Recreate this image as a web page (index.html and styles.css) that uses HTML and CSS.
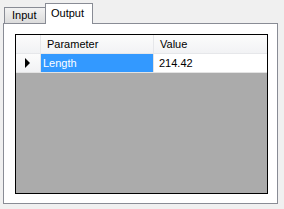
FILE: index.html
```html
<!DOCTYPE html>
<html lang="en">
<head>
    <meta charset="UTF-8">
    <title>Output</title>
    <link rel="stylesheet" href="styles.css">
</head>
<body>
    <div class="tabs">
        <div class="tab-strip">
            <div class="tab">Input</div>
            <div class="tab active">Output</div>
        </div>
        <div class="tab-page">
            <div class="grid">
                <div class="grid-row header">
                    <div class="cell row-head"></div>
                    <div class="cell">Parameter</div>
                    <div class="cell">Value</div>
                </div>
                <div class="grid-row">
                    <div class="cell row-head"><span class="arrow"></span></div>
                    <div class="cell selected">Length</div>
                    <div class="cell">214.42</div>
                </div>
            </div>
        </div>
    </div>
</body>
</html>
```

FILE: styles.css
```css
body {
    margin: 0;
    background: #f0f0f0;
    font-family: 'Liberation Sans', Arial, sans-serif;
    font-size: 11px;
    color: #000;
}

.tabs {
    padding: 3px 6px 0 3px;
    height: 206px;
    display: flex;
    flex-direction: column;
}

.tab-strip {
    display: flex;
    align-items: flex-end;
    padding-left: 1px;
    height: 20px;
    position: relative;
    z-index: 1;
}

.tab {
    box-sizing: border-box;
    height: 16px;
    width: 42px;
    border: 1px solid #898c95;
    border-bottom: none;
    background: linear-gradient(#f2f2f2, #dcdcdc);
    padding-left: 7px;
    line-height: 15px;
}

.tab.active {
    height: 21px;
    width: 48px;
    margin-left: -1px;
    margin-bottom: -1px;
    background: #fff;
    padding-left: 5px;
    line-height: 19px;
}

.tab-page {
    flex: 1;
    background: #fff;
    border: 1px solid #898c95;
    margin-bottom: 5px;
    padding: 10px 9px 9px 11px;
    display: flex;
}

.grid {
    flex: 1;
    border: 1px solid #000;
    background: #ababab;
}

.grid-row {
    display: grid;
    grid-template-columns: 25px 113px 1fr;
    height: 19px;
    background: #fff;
}

.grid-row.header {
    background: linear-gradient(#fcfcfc, #f1f2f4);
}

.cell {
    border-right: 1px solid #e3e3e3;
    border-bottom: 1px solid #e3e3e3;
    padding-left: 5px;
    line-height: 19px;
    white-space: nowrap;
    overflow: hidden;
}

.header .cell {
    border-color: #e6e7ea;
    padding-left: 6px;
}

.cell:last-child {
    border-right: none;
}

.row-head {
    background: linear-gradient(#fcfcfc, #f1f2f4);
    padding-left: 0;
    display: flex;
    align-items: center;
    justify-content: center;
}

.selected {
    background: #3399ff;
    color: #fff;
    padding-left: 2px;
}

.arrow {
    width: 0;
    height: 0;
    border-top: 5px solid transparent;
    border-bottom: 5px solid transparent;
    border-left: 5px solid #000;
    margin-left: -1px;
}
```
